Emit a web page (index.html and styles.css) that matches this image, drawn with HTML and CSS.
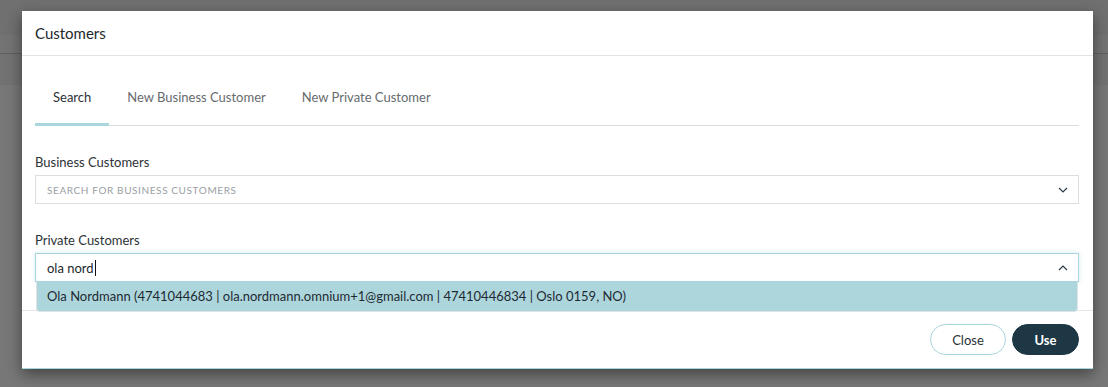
FILE: index.html
```html
<!DOCTYPE html>
<html lang="en">
<head>
    <meta charset="UTF-8">
    <meta name="viewport" content="width=device-width, initial-scale=1.0">
    <title>Customers</title>
    <link rel="stylesheet" href="styles.css">
</head>
<body>
    <div class="backdrop">
        <div class="modal">
            <div class="modal-header">Customers</div>
            <div class="modal-body">
                <ul class="tabs">
                    <li class="tab active">Search</li>
                    <li class="tab">New Business Customer</li>
                    <li class="tab">New Private Customer</li>
                </ul>

                <div class="form-group">
                    <label class="label">Business Customers</label>
                    <div class="select">
                        <span class="placeholder">Search for business customers</span>
                        <svg class="chevron" width="10" height="6" viewBox="0 0 10 6"><path d="M1 1l4 4 4-4" fill="none" stroke="#2b3a44" stroke-width="1.2"/></svg>
                    </div>
                </div>

                <div class="form-group">
                    <label class="label">Private Customers</label>
                    <div class="select select-open">
                        <span class="value">ola nord<span class="caret"></span></span>
                        <svg class="chevron" width="10" height="6" viewBox="0 0 10 6"><path d="M1 5l4-4 4 4" fill="none" stroke="#2b3a44" stroke-width="1.2"/></svg>
                        <div class="options">
                            <div class="option">Ola Nordmann (4741044683 | ola.nordmann.omnium+1@gmail.com | 47410446834 | Oslo 0159, NO)</div>
                        </div>
                    </div>
                </div>
            </div>
            <div class="modal-footer">
                <button class="btn btn-outline">Close</button>
                <button class="btn btn-dark">Use</button>
            </div>
        </div>
    </div>
</body>
</html>
```
FILE: styles.css
```css
* {
    box-sizing: border-box;
}

body {
    margin: 0;
    font-family: 'Lato', 'Open Sans', sans-serif;
    color: #2a2f33;
}

/* grey page behind the dialog */
.backdrop {
    height: 387px;
    padding: 11px 0 0 22px;
    background: linear-gradient(to bottom,
        #6f706f 0, #6f706f 35px,
        #727372 35px, #727372 53px,
        #5f605f 53px, #5f605f 54px,
        #717271 54px, #717271 85px,
        #767776 85px);
}

.modal {
    width: 1071px;
    background-color: #ffffff;
    border-bottom: 1px solid #a9d6dc;
    box-shadow: 0 5px 14px rgba(0, 0, 0, 0.45);
}

.modal-header {
    height: 45px;
    padding: 0 13px;
    line-height: 44px;
    font-size: 15px;
    color: #22282c;
    border-bottom: 1px solid #e3e3e3;
}

.modal-body {
    padding: 0 14px 28px 13px;
}

.tabs {
    display: flex;
    list-style: none;
    margin: 20px 0 0;
    padding: 0;
    border-bottom: 1px solid #dcdcdc;
}

.tab {
    padding: 11px 18px 16px;
    line-height: 20px;
    font-size: 13px;
    color: #666b6e;
    border-bottom: 3px solid transparent;
    margin-bottom: -1px;
}

.tab.active {
    color: #2d3236;
    border-bottom-color: #a9d6dc;
}

.form-group {
    margin-top: 27px;
}

.form-group + .form-group {
    margin-top: 27px;
}

.label {
    display: block;
    line-height: 18px;
    font-size: 13px;
    color: #2d3236;
    margin-bottom: 4px;
}

.select {
    position: relative;
    display: flex;
    align-items: center;
    justify-content: space-between;
    height: 29px;
    padding: 0 10px 0 11px;
    border: 1px solid #dedede;
}

.select-open {
    border-color: #a9d6dc;
    box-shadow: 0 0 4px rgba(169, 214, 220, 0.5);
}

.placeholder {
    font-size: 10px;
    letter-spacing: 0.6px;
    text-transform: uppercase;
    color: #9a9ea3;
}

.value {
    font-size: 13px;
    color: #22282c;
}

.caret {
    display: inline-block;
    width: 1px;
    height: 16px;
    margin-left: 1px;
    vertical-align: -3px;
    background-color: #111111;
}

.chevron {
    display: block;
}

.options {
    position: absolute;
    top: 28px;
    left: 0;
    right: 0;
    background-color: #add6dc;
    border: 1px solid #dfe3e4;
    border-top: none;
    border-radius: 0 0 4px 4px;
}

.option {
    height: 29px;
    line-height: 28px;
    padding: 0 10px;
    font-size: 13px;
    color: #1d2a33;
}

.modal-footer {
    display: flex;
    justify-content: flex-end;
    gap: 6px;
    padding: 13px 14px 13px;
    border-top: 1px solid #e5e5e5;
}

.btn {
    height: 31px;
    border-radius: 16px;
    font-family: inherit;
    font-size: 13px;
    cursor: pointer;
}

.btn-outline {
    width: 76px;
    background-color: #ffffff;
    border: 1px solid #a9d6dc;
    color: #2a3238;
}

.btn-dark {
    width: 67px;
    background-color: #1e3745;
    border: 1px solid #1e3745;
    color: #ffffff;
    font-weight: bold;
}
```
